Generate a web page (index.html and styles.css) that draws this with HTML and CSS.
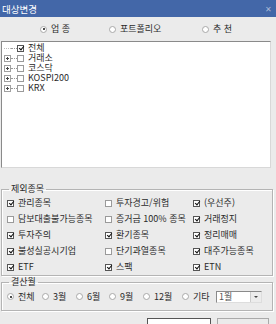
FILE: index.html
```html
<!DOCTYPE html>
<html lang="ko">
<head>
<meta charset="utf-8">
<link rel="stylesheet" href="styles.css">
</head>
<body>
<div class="dlg">
  <div class="title"><span>대상변경</span><span class="close">✕</span></div>
  <div class="body">
    <div class="tabs">
      <label class="radio on"><i></i>업 종</label>
      <label class="radio"><i></i>포트폴리오</label>
      <label class="radio"><i></i>추 천</label>
    </div>
    <div class="tree">
      <div class="node"><span class="exp leaf"></span><span class="ln"></span><i class="cb on"></i>전체</div>
      <div class="node"><span class="exp"></span><span class="ln"></span><i class="cb"></i>거래소</div>
      <div class="node"><span class="exp"></span><span class="ln"></span><i class="cb"></i>코스닥</div>
      <div class="node"><span class="exp"></span><span class="ln"></span><i class="cb"></i>KOSPI200</div>
      <div class="node"><span class="exp"></span><span class="ln"></span><i class="cb"></i>KRX</div>
    </div>
    <fieldset class="grp ex">
      <legend>제외종목</legend>
      <div class="grid">
        <label class="chk"><i class="cb on"></i>관리종목</label>
        <label class="chk"><i class="cb"></i>투자경고/위험</label>
        <label class="chk"><i class="cb on"></i>(우선주)</label>
        <label class="chk"><i class="cb"></i>담보대출불가능종목</label>
        <label class="chk"><i class="cb"></i>증거금 100% 종목</label>
        <label class="chk"><i class="cb on"></i>거래정지</label>
        <label class="chk"><i class="cb on"></i>투자주의</label>
        <label class="chk"><i class="cb on"></i>환기종목</label>
        <label class="chk"><i class="cb on"></i>정리매매</label>
        <label class="chk"><i class="cb on"></i>불성실공시기업</label>
        <label class="chk"><i class="cb"></i>단기과열종목</label>
        <label class="chk"><i class="cb on"></i>대주가능종목</label>
        <label class="chk"><i class="cb on"></i>ETF</label>
        <label class="chk"><i class="cb on"></i>스팩</label>
        <label class="chk"><i class="cb on"></i>ETN</label>
      </div>
    </fieldset>
    <fieldset class="grp mon">
      <legend>결산월</legend>
      <div class="months">
        <label class="radio on"><i></i>전체</label>
        <label class="radio"><i></i>3월</label>
        <label class="radio"><i></i>6월</label>
        <label class="radio"><i></i>9월</label>
        <label class="radio"><i></i>12월</label>
        <label class="radio"><i></i>기타</label>
        <div class="select"><span>1월</span><span class="dd"><b></b></span></div>
      </div>
    </fieldset>
    <div class="buttons">
      <span class="btn"></span>
      <span class="btn"></span>
    </div>
  </div>
</div>
</body>
</html>
```
FILE: styles.css
```css
* { box-sizing: border-box; margin: 0; padding: 0; }
html, body { width: 276px; height: 324px; overflow: hidden; }
body {
  background: #ebebeb;
  font-family: "Noto Sans CJK KR", "Liberation Sans", sans-serif;
  font-size: 9px;
  color: #2a2a2a;
  line-height: 10px;
}
.dlg { width: 276px; height: 324px; display: flex; flex-direction: column; }
.title {
  height: 17px; flex: none;
  background: #4367a8; color: #fff;
  display: flex; align-items: center; justify-content: space-between;
  padding: 0 4px 0 2px;
  font-size: 9.5px;
}
.close { color: #a9b8d6; font-size: 8px; }
.body { flex: 1; display: flex; flex-direction: column; padding: 0 3px 0 1px; }

.tabs {
  height: 24px; flex: none;
  display: grid; grid-template-columns: 69px 93px auto;
  align-items: center; padding-left: 39px;
}
.radio { display: flex; align-items: center; gap: 4px; white-space: nowrap; }
.radio i {
  width: 7px; height: 7px; border-radius: 50%;
  border: 1px solid #a8a8a8; background: #fff; position: relative; flex: none;
}
.radio.on i::after {
  content: ""; position: absolute; left: 1.5px; top: 1.5px;
  width: 2px; height: 2px; border-radius: 50%; background: #111;
}

.tree {
  height: 127px; flex: none; margin-right: 2px;
  background: #fff;
  border: 1px solid #8a8a8a; border-right-color: #d8d8d8; border-bottom-color: #d8d8d8;
  padding-top: 1px;
}
.node { height: 10px; display: flex; align-items: center; }
.exp {
  width: 7px; height: 7px; margin-left: 2px; flex: none;
  border: 1px solid #a0a0a0; position: relative; background: #fff;
}
.exp::before { content: ""; position: absolute; left: 1px; top: 2px; width: 3px; height: 1px; background: #444; }
.exp::after { content: ""; position: absolute; left: 2px; top: 1px; width: 1px; height: 3px; background: #444; }
.exp.leaf { border-top: 1px dotted #bbb; border-left: none; border-right: none; border-bottom: none; height: 1px; }
.exp.leaf::before, .exp.leaf::after { display: none; }
.ln { width: 6px; height: 1px; border-top: 1px dotted #999; flex: none; }
.cb {
  width: 7px; height: 7px; flex: none;
  border: 1px solid #9a9a9a; background: #fff; position: relative;
  margin-right: 4px;
}
.cb.on { border-color: #555; }
.cb.on::after {
  content: ""; position: absolute; left: 1.5px; top: -0.5px;
  width: 2px; height: 4px;
  border-right: 1.3px solid #111; border-bottom: 1.3px solid #111;
  transform: rotate(40deg);
}

.grp {
  border: 1px solid #b4b4b4;
  box-shadow: inset 1px 1px 0 #fff, 1px 1px 0 #fff;
  flex: none;
}
.grp legend { margin-left: 2px; padding: 0 2px; line-height: 12px; height: 12px; }
.ex { margin-top: 15px; padding: 0 0 0 5px; }
.grid { display: grid; grid-template-columns: 98px 88px auto; grid-auto-rows: 16px; }
.chk { display: flex; align-items: center; white-space: nowrap; }

.mon { padding: 1px 0 6px 5px; }
.months {
  display: grid; grid-template-columns: 35px 34px 33px 34px 39px 34px auto;
  align-items: center; height: 15px;
}
.select {
  width: 46px; height: 12px;
  background: #fff; border: 1px solid #8a8a8a; border-right-color: #ddd; border-bottom-color: #ddd;
  display: flex; justify-content: space-between; align-items: center;
  padding-left: 2px; color: #555;
}
.dd {
  width: 11px; height: 10px; background: #ececec;
  border-left: 1px solid #ccc; display: flex; align-items: center; justify-content: center;
}
.dd b { width: 0; height: 0; border-left: 2px solid transparent; border-right: 2px solid transparent; border-top: 2px solid #444; }

.buttons { display: flex; gap: 6px; padding: 7px 0 0 146px; }
.btn { width: 64px; height: 20px; background: #fff; border: 1px solid #555; }
.btn + .btn { width: 52px; background: #ebebeb; border-color: #aaa; }
```
